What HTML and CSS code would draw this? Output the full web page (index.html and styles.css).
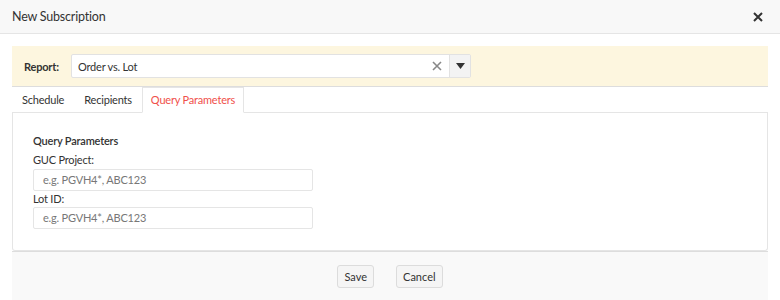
FILE: index.html
```html
<!DOCTYPE html>
<html>
<head>
<meta charset="utf-8">
<link rel="stylesheet" href="styles.css">
</head>
<body>
<div class="dialog">
  <div class="header">
    <span class="title">New Subscription</span>
    <span class="close">
      <svg width="10" height="10" viewBox="0 0 10 10"><path d="M1 1L9 9M9 1L1 9" stroke="#333" stroke-width="2"/></svg>
    </span>
  </div>
  <div class="body">
    <div class="report-bar">
      <span class="report-label">Report:</span>
      <div class="select">
        <span class="select-value">Order vs. Lot</span>
        <span class="clear">
          <svg width="10" height="10" viewBox="0 0 10 10"><path d="M1 1L9 9M9 1L1 9" stroke="#888" stroke-width="1.6"/></svg>
        </span>
        <span class="arrow">
          <svg width="9" height="6" viewBox="0 0 9 6"><path d="M0 0H9L4.5 6Z" fill="#333"/></svg>
        </span>
      </div>
    </div>
    <div class="tabs">
      <span class="tab">Schedule</span>
      <span class="tab">Recipients</span>
      <span class="tab active">Query Parameters</span>
    </div>
    <div class="panel">
      <div class="panel-title">Query Parameters</div>
      <label class="field-label">GUC Project:</label>
      <div class="input">e.g. PGVH4*, ABC123</div>
      <label class="field-label">Lot ID:</label>
      <div class="input">e.g. PGVH4*, ABC123</div>
    </div>
    <div class="footer">
      <button class="btn">Save</button>
      <button class="btn">Cancel</button>
    </div>
  </div>
</div>
</body>
</html>
```
FILE: styles.css
```css
* { box-sizing: border-box; }
html, body { margin: 0; padding: 0; background: #fff; }
body {
  font-family: "Lato", "Open Sans", sans-serif;
  font-size: 11px;
  letter-spacing: -0.2px;
  color: #333;
  width: 780px;
  height: 300px;
  overflow: hidden;
}
.header {
  height: 34px;
  background: #f8f8f8;
  border-bottom: 1px solid #e5e5e5;
  display: flex;
  align-items: center;
  justify-content: space-between;
  padding: 0 17px 0 12px;
}
.title { font-size: 12.5px; letter-spacing: -0.2px; color: #333; }
.close { display: flex; }
.body { padding: 12px 12px 0 12px; }
.report-bar {
  height: 41px;
  background: #fdf6df;
  border-bottom: 1px solid #ddd;
  display: flex;
  align-items: center;
  padding: 0 0 0 12px;
}
.report-label { font-weight: bold; width: 47px; color: #333; }
.select {
  width: 400px;
  height: 24px;
  background: #fff;
  border: 1px solid #e2e2e2;
  border-radius: 2px;
  display: flex;
  align-items: center;
}
.select-value { flex: 1; padding-left: 6px; }
.clear { display: flex; width: 17px; }
.arrow {
  width: 21px;
  height: 22px;
  background: #f3f3f3;
  border-left: 1px solid #e2e2e2;
  display: flex;
  align-items: center;
  justify-content: center;
}
.tabs {
  display: flex;
  height: 26px;
  border-bottom: 1px solid #e5e5e5;
  align-items: flex-end;
}
.tab {
  padding: 0 10px;
  height: 25px;
  line-height: 25px;
  color: #333;
}
.tab.active {
  color: #f0504a;
  background: #fff;
  border: 1px solid #e5e5e5;
  border-bottom: 1px solid #fff;
  height: 26px;
  line-height: 24px;
  margin-bottom: -1px;
  padding: 0 8px;
}
.panel {
  height: 138px;
  border: 1px solid #e5e5e5;
  border-top: none;
  border-radius: 0 0 3px 3px;
  padding: 20px 20px;
}
.panel-title { font-weight: 600; line-height: 15px; margin-bottom: 4px; }
.field-label { display: block; line-height: 15px; margin-bottom: 2px; }
.input + .field-label { margin-bottom: 1px; }
.input {
  width: 280px;
  height: 22px;
  border: 1px solid #e5e5e5;
  border-radius: 2px;
  color: #777;
  padding: 0 9px;
  line-height: 20px;
}
.footer {
  height: 50px;
  background: #f9f9f9;
  border-top: 1px solid #ddd;
  display: flex;
  justify-content: center;
  align-items: center;
  gap: 22px;
}
.btn {
  font: inherit;
  color: #333;
  background: #f5f5f5;
  border: 1px solid #dcdcdc;
  border-radius: 3px;
  height: 23px;
  padding: 0 6px;
}
```
